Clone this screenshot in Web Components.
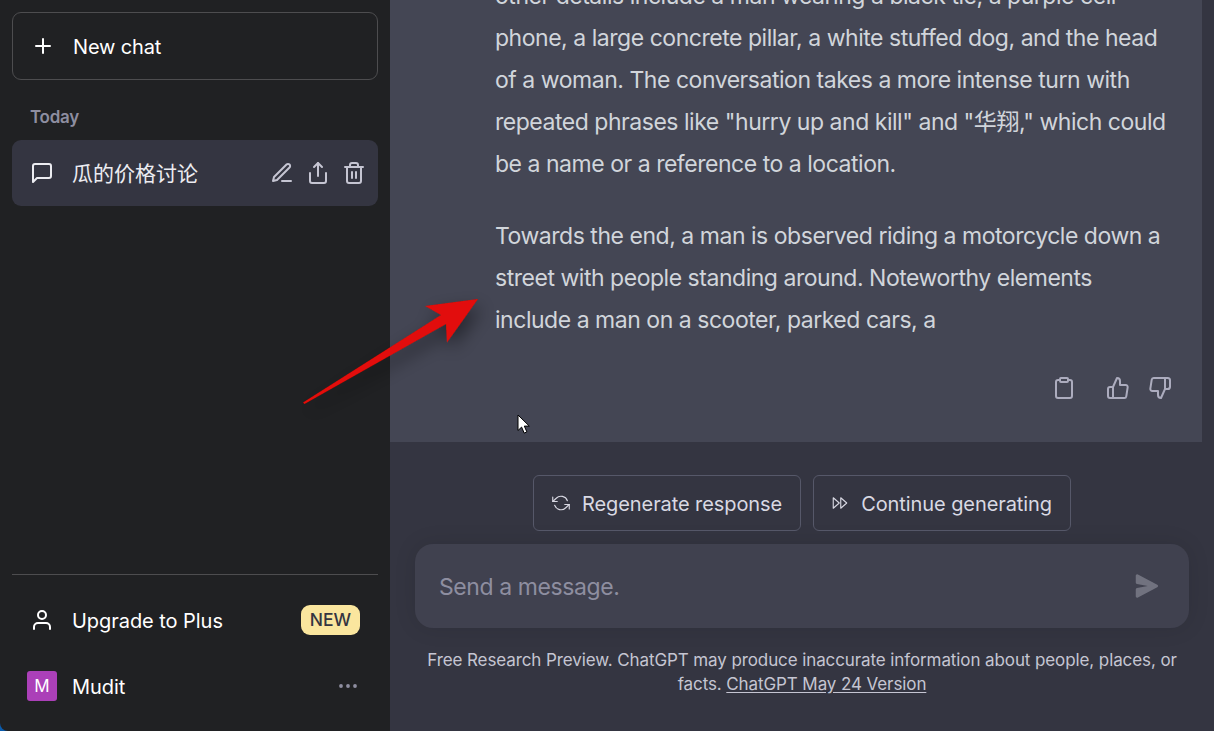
<!DOCTYPE html>
<html lang="en"><head><meta charset="utf-8"><title>ChatGPT</title>
<style>html,body{margin:0;height:100%;background:#0b5cad;overflow:hidden}</style></head>
<body><chat-app></chat-app>
<script>
const ICONS={
plus:'<line x1="12" y1="5" x2="12" y2="19"/><line x1="5" y1="12" x2="19" y2="12"/>',
msg:'<path d="M21 15a2 2 0 0 1-2 2H7l-4 4V5a2 2 0 0 1 2-2h14a2 2 0 0 1 2 2z"/>',
pencil:'<path d="M12 20h9"/><path d="M16.5 3.5a2.121 2.121 0 0 1 3 3L7 19l-4 1 1-4L16.5 3.5z"/>',
share:'<path d="M4 12v8a2 2 0 0 0 2 2h12a2 2 0 0 0 2-2v-8"/><polyline points="16 6 12 2 8 6"/><line x1="12" y1="2" x2="12" y2="15"/>',
trash:'<polyline points="3 6 5 6 21 6"/><path d="M19 6v14a2 2 0 0 1-2 2H7a2 2 0 0 1-2-2V6m3 0V4a2 2 0 0 1 2-2h4a2 2 0 0 1 2 2v2"/><line x1="10" y1="11" x2="10" y2="17"/><line x1="14" y1="11" x2="14" y2="17"/>',
user:'<path d="M20 21v-2a4 4 0 0 0-4-4H8a4 4 0 0 0-4 4v2"/><circle cx="12" cy="7" r="4"/>',
dots:'<circle cx="5" cy="12" r="1.9" fill="currentColor"/><circle cx="12" cy="12" r="1.9" fill="currentColor"/><circle cx="19" cy="12" r="1.9" fill="currentColor"/>',
clip:'<path d="M16 4h2a2 2 0 0 1 2 2v14a2 2 0 0 1-2 2H6a2 2 0 0 1-2-2V6a2 2 0 0 1 2-2h2"/><rect x="8" y="2" width="8" height="4" rx="1" ry="1"/>',
up:'<path d="M14 9V5a3 3 0 0 0-3-3l-4 9v11h11.28a2 2 0 0 0 2-1.7l1.38-9a2 2 0 0 0-2-2.3zM7 22H4a2 2 0 0 1-2-2v-7a2 2 0 0 1 2-2h3"/>',
down:'<path d="M10 15v4a3 3 0 0 0 3 3l4-9V2H5.72a2 2 0 0 0-2 1.7l-1.38 9a2 2 0 0 0 2 2.3zm7-13h2.67A2.31 2.31 0 0 1 22 4v7a2.31 2.31 0 0 1-2.33 2H17"/>',
regen:'<polyline points="1 4 1 10 7 10"/><polyline points="23 20 23 14 17 14"/><path d="M20.49 9A9 9 0 0 0 5.64 5.64L1 10m22 4l-4.64 4.36A9 9 0 0 1 3.51 15"/>',
cont:'<polygon points="3 5 11 12 3 19"/><polygon points="13 5 21 12 13 19"/>'
};
class UiIcon extends HTMLElement{connectedCallback(){
 const s=this.getAttribute('size')||24,w=this.getAttribute('sw')||2;
 this.attachShadow({mode:'open'}).innerHTML=`<style>:host{display:inline-flex;flex:none;width:${s}px;height:${s}px}svg{display:block}</style><svg width="${s}" height="${s}" viewBox="0 0 24 24" fill="none" stroke="currentColor" stroke-width="${w}" stroke-linecap="round" stroke-linejoin="round">${ICONS[this.getAttribute('name')]}</svg>`;
}}
customElements.define('ui-icon',UiIcon);

class NavRow extends HTMLElement{connectedCallback(){
 this.attachShadow({mode:'open'}).innerHTML=`<style>
 :host{display:flex;align-items:center;height:66px;padding:0 18px;gap:18px;box-sizing:border-box;color:#fff;font-size:20px;letter-spacing:-.05px}
 .t{flex:1;white-space:nowrap;padding-top:2px}
 ::slotted([slot=end]){display:flex;align-items:center}
 </style><slot name="icon"></slot><div class="t"><slot></slot></div><slot name="end"></slot>`;
}}
customElements.define('nav-row',NavRow);

class SideBar extends HTMLElement{connectedCallback(){
 this.attachShadow({mode:'open'}).innerHTML=`<style>
 :host{display:flex;flex-direction:column;width:390px;flex:none;box-sizing:border-box;padding:12px;background:#202123;border-bottom-left-radius:8px;font-family:Inter,"Noto Sans CJK SC",sans-serif}
 .new{display:flex;align-items:center;height:68px;box-sizing:border-box;border:1.5px solid #4d4d4f;border-radius:9px;padding:0 18px;gap:18px;color:#fff;font-size:20px;letter-spacing:-.15px}
 .new span{padding-top:2px}
 .today{margin:24px 0 0 18px;height:26px;line-height:26px;font-size:17px;font-weight:600;color:#8e8ea0;letter-spacing:-.3px}
 .sel{display:flex;align-items:center;margin-top:10px;height:66px;border-radius:9px;background:#343541;padding:0 12px 0 18px;gap:18px;color:#ececf1}
 .sel .t{flex:1;font:21px "Noto Sans CJK SC",sans-serif;color:#ececf1;padding-bottom:2px}
 .acts{display:flex;gap:12px;color:#c5c5d2}
 .sp{flex:1}
 .foot{border-top:1.5px solid #4d4d4f;padding-top:12px}
 .badge{background:#fae69e;color:#343541;font-size:17.5px;font-weight:500;border-radius:9px;height:30px;line-height:30px;padding:0 9px;letter-spacing:0}
 .av{width:30px;height:30px;border-radius:3px;background:#ab40b8;color:#fff;font-size:17px;display:flex;align-items:center;justify-content:center;flex:none;margin:0 -3px}
 </style>
 <div class="new"><ui-icon name="plus" size="24"></ui-icon><span>New chat</span></div>
 <div class="today">Today</div>
 <div class="sel"><ui-icon name="msg" size="24"></ui-icon><span class="t">瓜的价格讨论</span>
  <span class="acts"><ui-icon name="pencil" size="24"></ui-icon><ui-icon name="share" size="24"></ui-icon><ui-icon name="trash" size="24"></ui-icon></span></div>
 <div class="sp"></div>
 <div class="foot">
  <nav-row><ui-icon slot="icon" name="user" size="24"></ui-icon>Upgrade to Plus<span slot="end" class="badge">NEW</span></nav-row>
  <nav-row><span slot="icon" class="av">M</span>Mudit<ui-icon slot="end" name="dots" size="24" sw="0" style="color:#8e8ea0"></ui-icon></nav-row>
 </div>`;
}}
customElements.define('side-bar',SideBar);

class ChatMessage extends HTMLElement{connectedCallback(){
 this.attachShadow({mode:'open'}).innerHTML=`<style>
 :host{display:flex;flex-direction:column;height:442px;margin-right:12px;box-sizing:border-box;background:#444654;overflow:hidden;color:#d1d5db;font-size:23px;line-height:42px;padding-left:105px;letter-spacing:-.47px}
 .body{margin-top:-25px;width:675px}
 .acts{display:flex;justify-content:flex-end;margin:35px 30px 0 0;color:#acacbe}
 .acts ui-icon:first-child{margin-right:30px}.acts ui-icon:nth-child(2){margin-right:18px}
 </style><div class="body"><slot></slot></div>
 <div class="acts"><ui-icon name="clip"></ui-icon><ui-icon name="up"></ui-icon><ui-icon name="down"></ui-icon></div>`;
}}
customElements.define('chat-message',ChatMessage);

class PillButton extends HTMLElement{connectedCallback(){
 this.attachShadow({mode:'open'}).innerHTML=`<style>
 :host{display:inline-flex;align-items:center;height:56px;box-sizing:border-box;border:1.5px solid #565869;border-radius:6px;padding:0 17.5px;gap:12px;color:#d9d9e3;font-size:20px;letter-spacing:-.08px;white-space:nowrap}
 span{padding-top:2px}
 </style><ui-icon name="${this.getAttribute('icon')}" size="18" sw="1.5"></ui-icon><span><slot></slot></span>`;
}}
customElements.define('pill-button',PillButton);

class MessageBox extends HTMLElement{connectedCallback(){
 this.attachShadow({mode:'open'}).innerHTML=`<style>
 :host{display:flex;align-items:center;height:84px;margin:13px 25px 0 25px;box-sizing:border-box;padding:0 30px 0 24px;background:#40414f;border-radius:18px;box-shadow:0 0 22px rgba(0,0,0,.1);color:#8e8ea0;font-size:23px;letter-spacing:-.41px}
 span{flex:1;padding-top:2px}
 svg{display:block;color:#71727f}
 </style><span>Send a message.</span><svg width="24" height="24" viewBox="0 0 16 16" fill="currentColor"><path d="M.5 1.163A1 1 0 0 1 1.97.28l12.868 6.837a1 1 0 0 1 0 1.766L1.969 15.72A1 1 0 0 1 .5 14.836V10.33a1 1 0 0 1 .816-.983L8.5 8 1.316 6.653A1 1 0 0 1 .5 5.67V1.163Z"/></svg>`;
}}
customElements.define('message-box',MessageBox);

class ChatMain extends HTMLElement{connectedCallback(){
 this.attachShadow({mode:'open'}).innerHTML=`<style>
 :host{display:flex;flex-direction:column;flex:1;min-width:0;background:#343541;font-family:Inter,"Noto Sans CJK SC",sans-serif}
 .btns{display:flex;justify-content:center;gap:12px;margin-top:33px}
 .note{text-align:center;color:#c5c5d2;font-size:17px;line-height:24px;margin:20px 25px 0;letter-spacing:-.1px}
 u{text-underline-offset:2px}
 </style>
 <chat-message><slot></slot></chat-message>
 <div class="btns"><pill-button icon="regen">Regenerate response</pill-button><pill-button icon="cont">Continue generating</pill-button></div>
 <message-box></message-box>
 <div class="note">Free Research Preview. ChatGPT may produce inaccurate information about people, places, or<br>facts. <u>ChatGPT May 24 Version</u></div>`;
}}
customElements.define('chat-main',ChatMain);

class ChatApp extends HTMLElement{connectedCallback(){
 this.attachShadow({mode:'open'}).innerHTML=`<style>
 :host{display:flex;position:relative;width:1214px;height:731px;overflow:hidden}
 svg{position:absolute;left:0;top:0;pointer-events:none}
 p{margin:0 0 30px}
 p:last-of-type{margin:0}
 </style><side-bar></side-bar>
 <chat-main>
  <p>other details include a man wearing a black tie, a purple cell phone, a large concrete pillar, a white stuffed dog, and the head of a woman. The conversation takes a more intense turn with repeated phrases like "hurry up and kill" and "华翔," which could be a name or a reference to a location.</p>
  <p>Towards the end, a man is observed riding a motorcycle down a street with people standing around. Noteworthy elements include a man on a scooter, parked cars, a</p>
 </chat-main>
 <svg width="1214" height="731" viewBox="0 0 1214 731">
  <defs><filter id="s" x="-30%" y="-30%" width="160%" height="160%"><feDropShadow dx="4" dy="8" stdDeviation="9" flood-color="#000" flood-opacity=".45"/></filter></defs>
  <polygon filter="url(#s)" fill="#e20a07" points="303,402.5 441,315 425,306 478,299 447,342.5 446,324 304.5,404"/>
  <path d="M518 415v15.5l3.6-3.4 2.6 6 2.7-1.2-2.6-5.8h5z" fill="#fff" stroke="#000" stroke-width="1"/>
 </svg>`;
}}
customElements.define('chat-app',ChatApp);
</script></body></html>
